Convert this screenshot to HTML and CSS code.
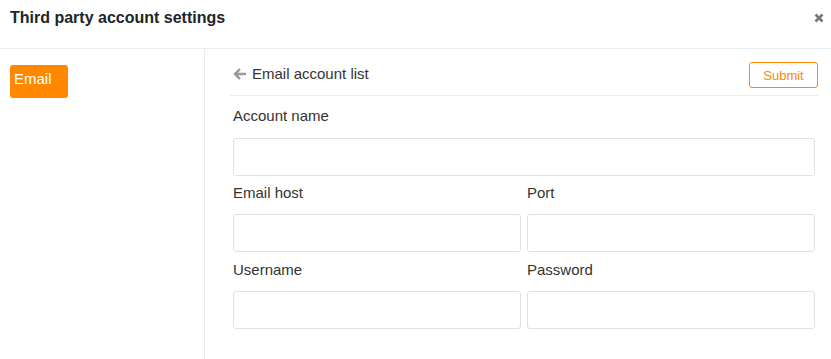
FILE: index.html
```html
<!DOCTYPE html>
<html lang="en">

<head>
  <meta charset="UTF-8" />
  <meta name="viewport" content="width=device-width, initial-scale=1.0" />
  <title>Third party account settings</title>
  <link rel="stylesheet" href="styles.css">
</head>

<body>
  <div class="dialog">
    <div class="dialog-header">
      <h4 class="dialog-title">Third party account settings</h4>
      <button class="dialog-close" aria-label="Close">
        <svg width="10" height="10" viewBox="0 0 10 10">
          <path d="M1.5 1.5 L8.5 8.5 M8.5 1.5 L1.5 8.5" stroke="#777" stroke-width="2.6" stroke-linecap="butt" />
        </svg>
      </button>
    </div>

    <div class="dialog-body">
      <div class="side-nav">
        <div class="nav-item active">Email</div>
      </div>

      <div class="content">
        <div class="content-header">
          <a class="back-link" href="#">
            <svg class="back-icon" width="13" height="12" viewBox="0 0 13 12">
              <path d="M13 6 H2.5 M7 1 L2 6 L7 11" fill="none" stroke="#999" stroke-width="2.4" stroke-linejoin="miter" />
            </svg>
            Email account list
          </a>
          <button class="btn-submit">Submit</button>
        </div>

        <form class="account-form">
          <div class="field">
            <label for="accountName">Account name</label>
            <input type="text" id="accountName" />
          </div>

          <div class="field-row">
            <div class="field">
              <label for="emailHost">Email host</label>
              <input type="text" id="emailHost" />
            </div>
            <div class="field">
              <label for="port">Port</label>
              <input type="text" id="port" />
            </div>
          </div>

          <div class="field-row">
            <div class="field">
              <label for="username">Username</label>
              <input type="text" id="username" />
            </div>
            <div class="field">
              <label for="password">Password</label>
              <input type="password" id="password" />
            </div>
          </div>
        </form>
      </div>
    </div>
  </div>
</body>

</html>
```

FILE: styles.css
```css
body {
  margin: 0;
  font-family: "Liberation Sans", Arial, sans-serif;
  background-color: #fff;
  color: #333;
}

.dialog {
  width: 831px;
  height: 359px;
  display: flex;
  flex-direction: column;
  overflow: hidden;
}

.dialog-header {
  height: 49px;
  border-bottom: 1px solid #e9ecef;
  display: flex;
  align-items: center;
  justify-content: space-between;
  padding: 0 7px 0 10px;
  box-sizing: border-box;
  flex-shrink: 0;
}

.dialog-title {
  margin: 0 0 12px;
  font-size: 16px;
  font-weight: 700;
  color: #212529;
}

.dialog-close {
  background: none;
  border: none;
  padding: 0;
  margin-bottom: 12px;
  cursor: pointer;
  display: flex;
}

.dialog-body {
  flex: 1;
  display: flex;
}

/* Menu lateral */
.side-nav {
  width: 205px;
  border-right: 1px solid #e9ecef;
  padding: 16px 10px;
  box-sizing: border-box;
  flex-shrink: 0;
}

.nav-item {
  width: 58px;
  height: 33px;
  box-sizing: border-box;
  padding: 5px 4px;
  font-size: 15px;
  border-radius: 3px;
  cursor: pointer;
}

.nav-item.active {
  background-color: #ff8800;
  color: #fff;
}

.content {
  flex: 1;
  padding: 13px 13px 0 28px;
}

.content-header {
  display: flex;
  align-items: center;
  justify-content: space-between;
  height: 32px;
  border-bottom: 1px solid #e9ecef;
  margin-left: -3px;
  padding-left: 3px;
  padding-bottom: 1px;
}

.back-link {
  display: flex;
  align-items: center;
  gap: 6px;
  font-size: 15px;
  color: #333;
  text-decoration: none;
  margin-top: -9px;
}

.btn-submit {
  height: 26px;
  width: 69px;
  background: #fff;
  border: 1px solid #ff8800;
  border-radius: 3px;
  color: #ff8800;
  font-family: inherit;
  font-size: 13px;
  padding: 0;
  margin-top: -6px;
  cursor: pointer;
}

.account-form {
  display: flex;
  flex-direction: column;
  gap: 6px;
  margin-top: 10px;
  padding-right: 3px;
}

.field-row {
  display: grid;
  grid-template-columns: 1fr 1fr;
  gap: 6px;
}

.field-row label {
  padding-top: 1px;
  margin-bottom: 11px;
}

.field-row + .field-row {
  margin-top: 1px;
}

.field label {
  display: block;
  font-size: 15px;
  line-height: 20px;
  margin-bottom: 12px;
}

.field-row .field label {
  padding-top: 1px;
  margin-bottom: 11px;
}

.field input {
  display: block;
  width: 100%;
  height: 38px;
  box-sizing: border-box;
  border: 1px solid #dee2e6;
  border-radius: 3px;
  padding: 0 10px;
  font-family: inherit;
  font-size: 14px;
}
```
